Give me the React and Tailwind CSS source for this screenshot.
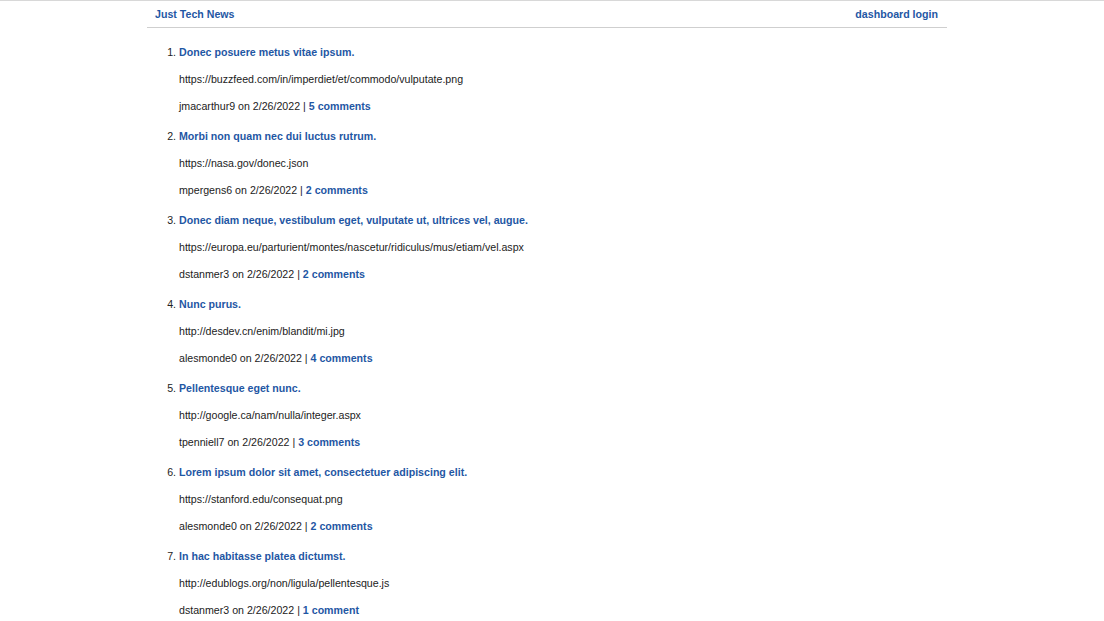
import React from "react";

const items = [
  ["Donec posuere metus vitae ipsum.", "https://buzzfeed.com/in/imperdiet/et/commodo/vulputate.png", "jmacarthur9", "5 comments"],
  ["Morbi non quam nec dui luctus rutrum.", "https://nasa.gov/donec.json", "mpergens6", "2 comments"],
  ["Donec diam neque, vestibulum eget, vulputate ut, ultrices vel, augue.", "https://europa.eu/parturient/montes/nascetur/ridiculus/mus/etiam/vel.aspx", "dstanmer3", "2 comments"],
  ["Nunc purus.", "http://desdev.cn/enim/blandit/mi.jpg", "alesmonde0", "4 comments"],
  ["Pellentesque eget nunc.", "http://google.ca/nam/nulla/integer.aspx", "tpenniell7", "3 comments"],
  ["Lorem ipsum dolor sit amet, consectetuer adipiscing elit.", "https://stanford.edu/consequat.png", "alesmonde0", "2 comments"],
  ["In hac habitasse platea dictumst.", "http://edublogs.org/non/ligula/pellentesque.js", "dstanmer3", "1 comment"],
];

export default function App() {
  return (
    <div className="min-h-[621px] bg-white border-t border-[#d8d8d8] text-[10.63px] text-[#222] [font-family:'Liberation_Sans',Arial,sans-serif]">
      <div className="ml-[147px] w-[800px]">
        <header className="h-[27px] pt-[2px] flex items-center justify-between px-2 border-b border-[#cfcfcf]">
          <a className="font-bold text-[#1f57a4]">Just Tech News</a>
          <a className="font-bold text-[#1f57a4] mr-px">dashboard login</a>
        </header>
        <ol className="list-decimal pl-[32px] mt-[16px]">
          {items.map(([t, u, user, c], i) => (
            <li key={i} className="pb-[14px] leading-[16px]">
              <div className="h-[16px] mb-[11px] font-bold text-[#1f57a4]">{t}</div>
              <div className="h-[16px] mb-[11px]">{u}</div>
              <div className="h-[16px]">
                {user} on 2/26/2022 | <span className="font-bold text-[#1f57a4]">{c}</span>
              </div>
            </li>
          ))}
        </ol>
      </div>
    </div>
  );
}
